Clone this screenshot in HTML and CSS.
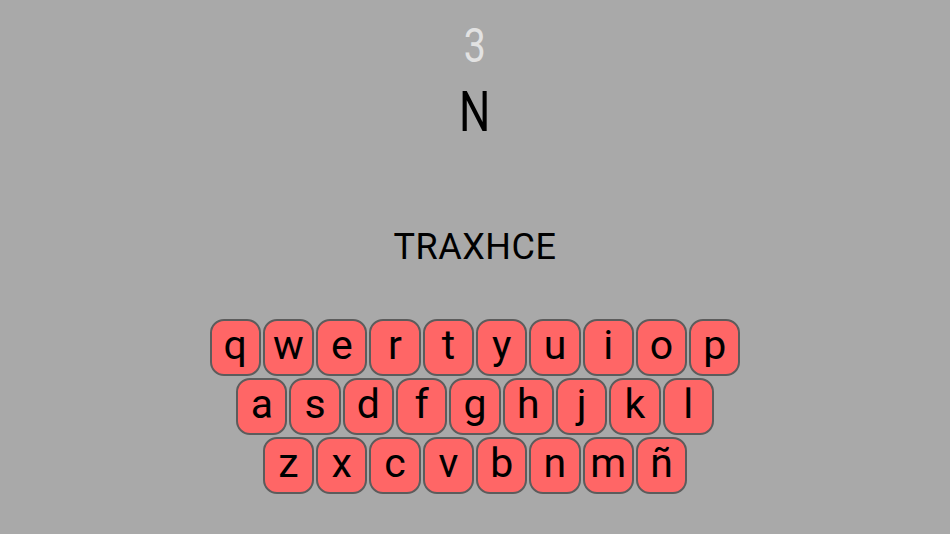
FILE: index.html
```html
<!DOCTYPE html>
<html>
<head>
<meta charset="utf-8">
<link rel="stylesheet" href="styles.css">
</head>
<body>
<div class="app">
  <div class="count"><span class="sq">3</span></div>
  <div class="letter"><span class="sq">N</span></div>
  <div class="word">TRAXHCE</div>
  <div class="keyboard">
    <div class="row">
      <div class="key"><span>q</span></div><div class="key"><span>w</span></div><div class="key"><span>e</span></div><div class="key"><span>r</span></div><div class="key"><span>t</span></div><div class="key"><span>y</span></div><div class="key"><span>u</span></div><div class="key"><span>i</span></div><div class="key"><span>o</span></div><div class="key"><span>p</span></div>
    </div>
    <div class="row">
      <div class="key"><span>a</span></div><div class="key"><span>s</span></div><div class="key"><span>d</span></div><div class="key"><span>f</span></div><div class="key"><span>g</span></div><div class="key"><span>h</span></div><div class="key"><span>j</span></div><div class="key"><span>k</span></div><div class="key"><span>l</span></div>
    </div>
    <div class="row">
      <div class="key"><span>z</span></div><div class="key"><span>x</span></div><div class="key"><span>c</span></div><div class="key"><span>v</span></div><div class="key"><span>b</span></div><div class="key"><span>n</span></div><div class="key"><span>m</span></div><div class="key"><span>ñ</span></div>
    </div>
  </div>
</div>
</body>
</html>
```
FILE: styles.css
```css
html, body {
  margin: 0;
  padding: 0;
  background: #a9a9a9;
  width: 950px;
  height: 534px;
  overflow: hidden;
  font-family: Roboto, "Liberation Sans", sans-serif;
}
.app {
  display: flex;
  flex-direction: column;
  align-items: center;
}
.sq {
  display: inline-block;
  transform: scaleX(0.8);
}
.count {
  margin-top: 18px;
  height: 56px;
  line-height: 56px;
  font-size: 49px;
  color: #e2e2e2;
}
.letter {
  margin-top: 6px;
  height: 64px;
  line-height: 64px;
  font-size: 55px;
  color: #000;
}
.word {
  margin-top: 82px;
  height: 42px;
  line-height: 42px;
  font-size: 36px;
  letter-spacing: 0.5px;
  color: #000;
}
.keyboard {
  margin-top: 51px;
  display: flex;
  flex-direction: column;
  align-items: center;
  gap: 2px;
}
.row {
  display: flex;
  gap: 2px;
}
.key {
  width: 51.3px;
  height: 57px;
  box-sizing: border-box;
  border: 2.5px solid #5c5c5c;
  border-radius: 14px;
  background: #ff6666;
  display: flex;
  align-items: center;
  justify-content: center;
  font-size: 41px;
  color: #000;
}
.key span {
  display: inline-block;
  line-height: 1;
  margin-top: -4px;
}
```
